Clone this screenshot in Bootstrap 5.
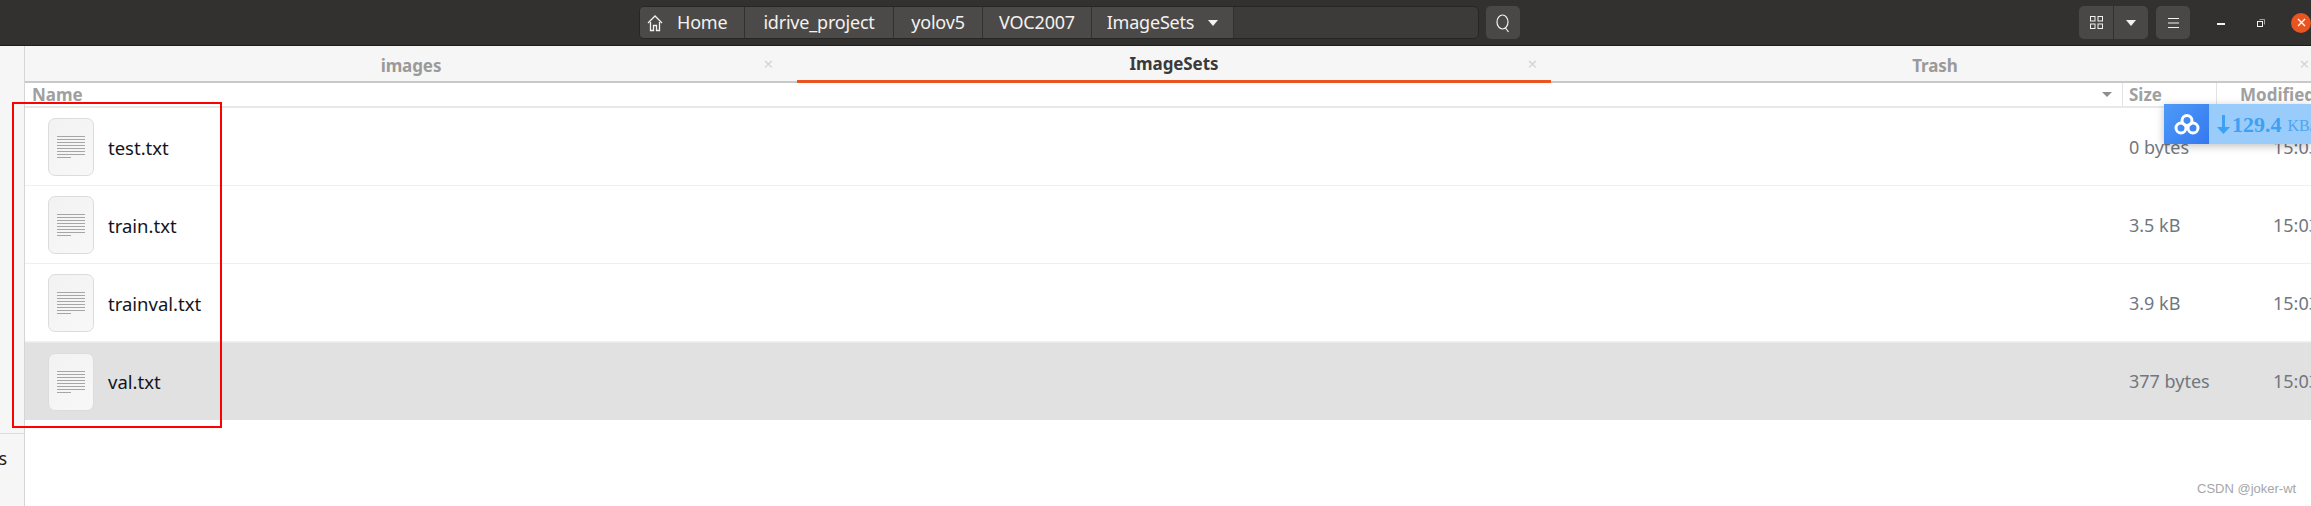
<!DOCTYPE html>
<html lang="en">
<head>
<meta charset="UTF-8">
<title>ImageSets</title>
<link href="https://cdn.jsdelivr.net/npm/bootstrap@5.3.0/dist/css/bootstrap.min.css" rel="stylesheet">
<style>
  html, body { height: 100%; }
  body { width: 2311px; height: 506px; overflow: hidden; background: #fff; font-family: "Noto Sans", "Open Sans", sans-serif; position: relative; }
  .top-bar { height: 46px; background: #333130; border-bottom: 1px solid #1e1d1c; padding: 6px 0 0 639px; color: #f4f2f0; }
  .path-bar { width: 840px; height: 33px; background: #3d3b39; border: 1px solid #272625; border-radius: 5px; overflow: hidden; }
  .path-seg { height: 100%; background: #4c4a48; border-right: 1px solid #333130; font-size: 18px; letter-spacing: -.2px; }
  .seg-home { width: 105px; padding-left: 7px; gap: 14px; }
  .seg-project { width: 149px; }
  .seg-yolo { width: 89px; }
  .seg-voc { width: 109px; }
  .seg-sets { width: 142px; gap: 14px; }
  .tool-btn { height: 33px; background: #4a4846; border-radius: 5px; }
  .btn-search { width: 34px; margin-left: 7px; margin-right: 559px; }
  .btn-view { width: 35px; border-radius: 5px 0 0 5px; border-right: 1px solid #333130; }
  .btn-drop { width: 34px; border-radius: 0 5px 5px 0; margin-right: 8px; }
  .btn-menu { width: 34px; margin-right: 27px; }
  .win-min { width: 8px; height: 2px; background: #f4f2f0; margin-top: 3px; margin-right: 32px; }
  .win-max { margin-right: 26px; }
  .win-close { width: 20px; height: 20px; background: #e95420; border-radius: 50%; }
  .main-area { height: 460px; }
  .side-bar { width: 25px; flex: none; background: #f6f6f6; border-right: 1px solid #d5d5d5; overflow: hidden; }
  .side-line { margin-top: 387px; border-top: 1px solid #dcdcdc; }
  .side-text { font-size: 18px; line-height: 24px; margin-top: 12px; margin-left: -1px; color: #222; width: 8px; overflow: hidden; display: flex; justify-content: flex-end; }
  .tab-strip { height: 37px; background: #f6f6f6; border-bottom: 2px solid #c9c9c9; font-size: 17px; font-weight: 700; color: #9a9a9a; letter-spacing: -.1px; }
  .tab-item { height: 37px; position: relative; padding-top: 2px; }
  .tab-images { width: 772px; }
  .tab-sets { width: 754px; color: #3a3a3a; border-bottom: 3px solid #e95420; }
  .tab-trash { flex: 1; }
  .tab-close { position: absolute; top: 9px; right: 14px; font-size: 17px; font-weight: 400; color: #d4d4d4; line-height: 18px; }
  .tab-images .tab-close { right: 24px; }
  .tab-trash .tab-close { right: 10px; }
  .col-heads { height: 25px; border-bottom: 2px solid #e8e8e8; font-size: 17px; font-weight: 700; color: #a0a0a0; }
  .head-name { width: 2097px; padding-left: 7px; position: relative; line-height: 23px; }
  .head-size { width: 94px; padding-left: 6px; line-height: 23px; border-left: 1px solid #e3e3e3; }
  .head-mod { flex: 1; padding-left: 23px; line-height: 23px; border-left: 1px solid #e3e3e3; white-space: nowrap; overflow: hidden; }
  .sort-arrow { position: absolute; right: 10px; top: 9px; width: 0; height: 0; border-left: 5px solid transparent; border-right: 5px solid transparent; border-top: 5px solid #8e8e8e; }
  .file-rows { border-radius: 0; }
  .file-row { height: 78px; padding: 0; border: 0; border-bottom: 1px solid #efefef; font-size: 18px; color: #14141c; margin: 0; background: #fff; }
  .file-row.is-picked { background: #e1e1e1; border-bottom: 0; border-top: 1px solid #e9e9e9; }
  .file-name { width: 2104px; padding-left: 23px; gap: 14px; }
  .file-name span { font-size: 18.500px; padding-top: 2px; }
  .file-size { width: 144px; color: #70777f; white-space: nowrap; padding-top: 2px; }
  .file-time { flex: 1; color: #70777f; white-space: nowrap; overflow: hidden; padding-top: 2px; }
  .is-picked .file-name span, .is-picked .file-size, .is-picked .file-time { padding-top: 0; }
  .doc-icon { width: 46px; height: 58px; background: linear-gradient(135deg, #f2f2f2, #f8f8f8); border: 1px solid #dcdcdc; border-radius: 7px; padding: 17px 8px 0 8px; flex: none; }
  .doc-icon i { display: block; height: 1px; background: #a6a6a6; margin-bottom: 2px; }
  .doc-icon i:last-child { width: 50%; }
  .red-box { position: absolute; left: 12px; top: 102px; width: 210px; height: 326px; border: 2px solid #f00; }
  .speed-box { position: absolute; left: 2164px; top: 104px; width: 147px; height: 40px; background: #99ccfa; box-shadow: 0 2px 8px rgba(0,0,0,.25); overflow: hidden; white-space: nowrap; }
  .speed-logo { width: 45px; height: 40px; background: linear-gradient(135deg, #4d9bf8, #3478f0); flex: none; }
  .speed-val { font-family: "Liberation Serif", serif; font-weight: 700; font-size: 22px; color: #3ea0f2; margin-left: 8px; gap: 2px; }
  .speed-unit { font-weight: 400; font-size: 16px; margin-left: 4px; margin-top: 3px; color: #4ea5f0; }
  .mark-text { position: absolute; left: 2197px; top: 481px; font-family: "Liberation Sans", sans-serif; font-size: 13px; line-height: 16px; color: #a6a6a6; }
</style>
</head>
<body>
  <div class="top-bar d-flex align-items-start">
    <div class="path-bar d-flex">
      <div class="path-seg seg-home d-flex align-items-center">
        <svg width="16" height="18" viewBox="0 0 16 18" fill="none" stroke="#f4f2f0" stroke-width="1.3"><path d="M1 9 8 2l7 7"/><path d="M3.5 8v8.5h3v-5h3v5h3V8"/></svg>
        <span>Home</span>
      </div>
      <div class="path-seg seg-project d-flex align-items-center justify-content-center">idrive_project</div>
      <div class="path-seg seg-yolo d-flex align-items-center justify-content-center">yolov5</div>
      <div class="path-seg seg-voc d-flex align-items-center justify-content-center">VOC2007</div>
      <div class="path-seg seg-sets d-flex align-items-center justify-content-center">
        <span>ImageSets</span>
        <svg width="10" height="6" viewBox="0 0 10 6" fill="#f4f2f0"><path d="M0 0h10L5 6z"/></svg>
      </div>
    </div>
    <div class="tool-btn btn-search d-flex align-items-center justify-content-center">
      <svg width="14" height="20" viewBox="0 0 14 20" fill="none" stroke="#f4f2f0" stroke-width="1.2"><ellipse cx="6.5" cy="9" rx="5.5" ry="7"/><path d="m9.5 15 3 4"/></svg>
    </div>
    <div class="tool-btn btn-view d-flex align-items-center justify-content-center">
      <svg width="13" height="13" viewBox="0 0 13 13" fill="none" stroke="#f4f2f0" stroke-width="1"><rect x=".5" y=".5" width="4.5" height="4.5"/><rect x="8" y=".5" width="4.5" height="4.5"/><rect x=".5" y="8" width="4.5" height="4.5"/><rect x="8" y="8" width="4.5" height="4.5"/></svg>
    </div>
    <div class="tool-btn btn-drop d-flex align-items-center justify-content-center">
      <svg width="10" height="6" viewBox="0 0 10 6" fill="#f4f2f0"><path d="M0 0h10L5 6z"/></svg>
    </div>
    <div class="tool-btn btn-menu d-flex align-items-center justify-content-center">
      <svg width="11" height="10" viewBox="0 0 11 10" stroke="#f4f2f0" stroke-width="1"><path d="M0 .5h11M0 5h11M0 9.500h11"/></svg>
    </div>
    <div class="d-flex align-items-center" style="height:33px">
      <div class="win-min"></div>
      <svg class="win-max" width="8" height="8" viewBox="0 0 8 8" fill="none" stroke="#f4f2f0"><rect x=".5" y="2.500" width="5" height="5"/><path d="M2.500.5h5v5" stroke-opacity=".6"/></svg>
      <div class="win-close d-flex align-items-center justify-content-center">
        <svg width="9" height="9" viewBox="0 0 9 9" stroke="#fff" stroke-width="1.300"><path d="m1 1 7 7M8 1 1 8"/></svg>
      </div>
    </div>
  </div>

  <div class="main-area d-flex">
    <div class="side-bar">
      <div class="side-line"></div>
      <div class="side-text">s</div>
    </div>
    <div class="flex-grow-1">
      <div class="tab-strip d-flex">
        <div class="tab-item tab-images d-flex align-items-center justify-content-center">images<span class="tab-close">×</span></div>
        <div class="tab-item tab-sets d-flex align-items-center justify-content-center">ImageSets<span class="tab-close">×</span></div>
        <div class="tab-item tab-trash d-flex align-items-center justify-content-center">Trash<span class="tab-close">×</span></div>
      </div>
      <div class="col-heads d-flex">
        <div class="head-name">Name<span class="sort-arrow"></span></div>
        <div class="head-size">Size</div>
        <div class="head-mod">Modified</div>
      </div>
      <ul class="list-group list-group-flush file-rows">
        <li class="list-group-item file-row d-flex align-items-center">
          <div class="file-name d-flex align-items-center"><div class="doc-icon"><i></i><i></i><i></i><i></i><i></i><i></i><i></i><i></i></div><span>test.txt</span></div>
          <div class="file-size">0 bytes</div>
          <div class="file-time">15:03</div>
        </li>
        <li class="list-group-item file-row d-flex align-items-center">
          <div class="file-name d-flex align-items-center"><div class="doc-icon"><i></i><i></i><i></i><i></i><i></i><i></i><i></i><i></i></div><span>train.txt</span></div>
          <div class="file-size">3.5 kB</div>
          <div class="file-time">15:03</div>
        </li>
        <li class="list-group-item file-row d-flex align-items-center">
          <div class="file-name d-flex align-items-center"><div class="doc-icon"><i></i><i></i><i></i><i></i><i></i><i></i><i></i><i></i></div><span>trainval.txt</span></div>
          <div class="file-size">3.9 kB</div>
          <div class="file-time">15:03</div>
        </li>
        <li class="list-group-item file-row is-picked d-flex align-items-center">
          <div class="file-name d-flex align-items-center"><div class="doc-icon"><i></i><i></i><i></i><i></i><i></i><i></i><i></i><i></i></div><span>val.txt</span></div>
          <div class="file-size">377 bytes</div>
          <div class="file-time">15:03</div>
        </li>
      </ul>
    </div>
  </div>

  <div class="red-box"></div>

  <div class="speed-box d-flex">
    <div class="speed-logo d-flex align-items-center justify-content-center">
      <svg width="26" height="21" viewBox="0 0 26 21" fill="none" stroke="#fff" stroke-width="3"><circle cx="13" cy="6.500" r="5"/><circle cx="7" cy="14" r="5"/><circle cx="19" cy="14" r="5"/></svg>
    </div>
    <div class="speed-val d-flex align-items-center">
      <svg width="13" height="19" viewBox="0 0 13 19" fill="#3ea0f2"><path d="M5 0h3v12h5l-6.500 7L0 12h5z"/></svg>
      <span>129.4</span><span class="speed-unit">KB/s</span>
    </div>
  </div>

  <div class="mark-text">CSDN @joker-wt</div>

  <script src="https://cdn.jsdelivr.net/npm/bootstrap@5.3.0/dist/js/bootstrap.bundle.min.js"></script>
</body>
</html>
